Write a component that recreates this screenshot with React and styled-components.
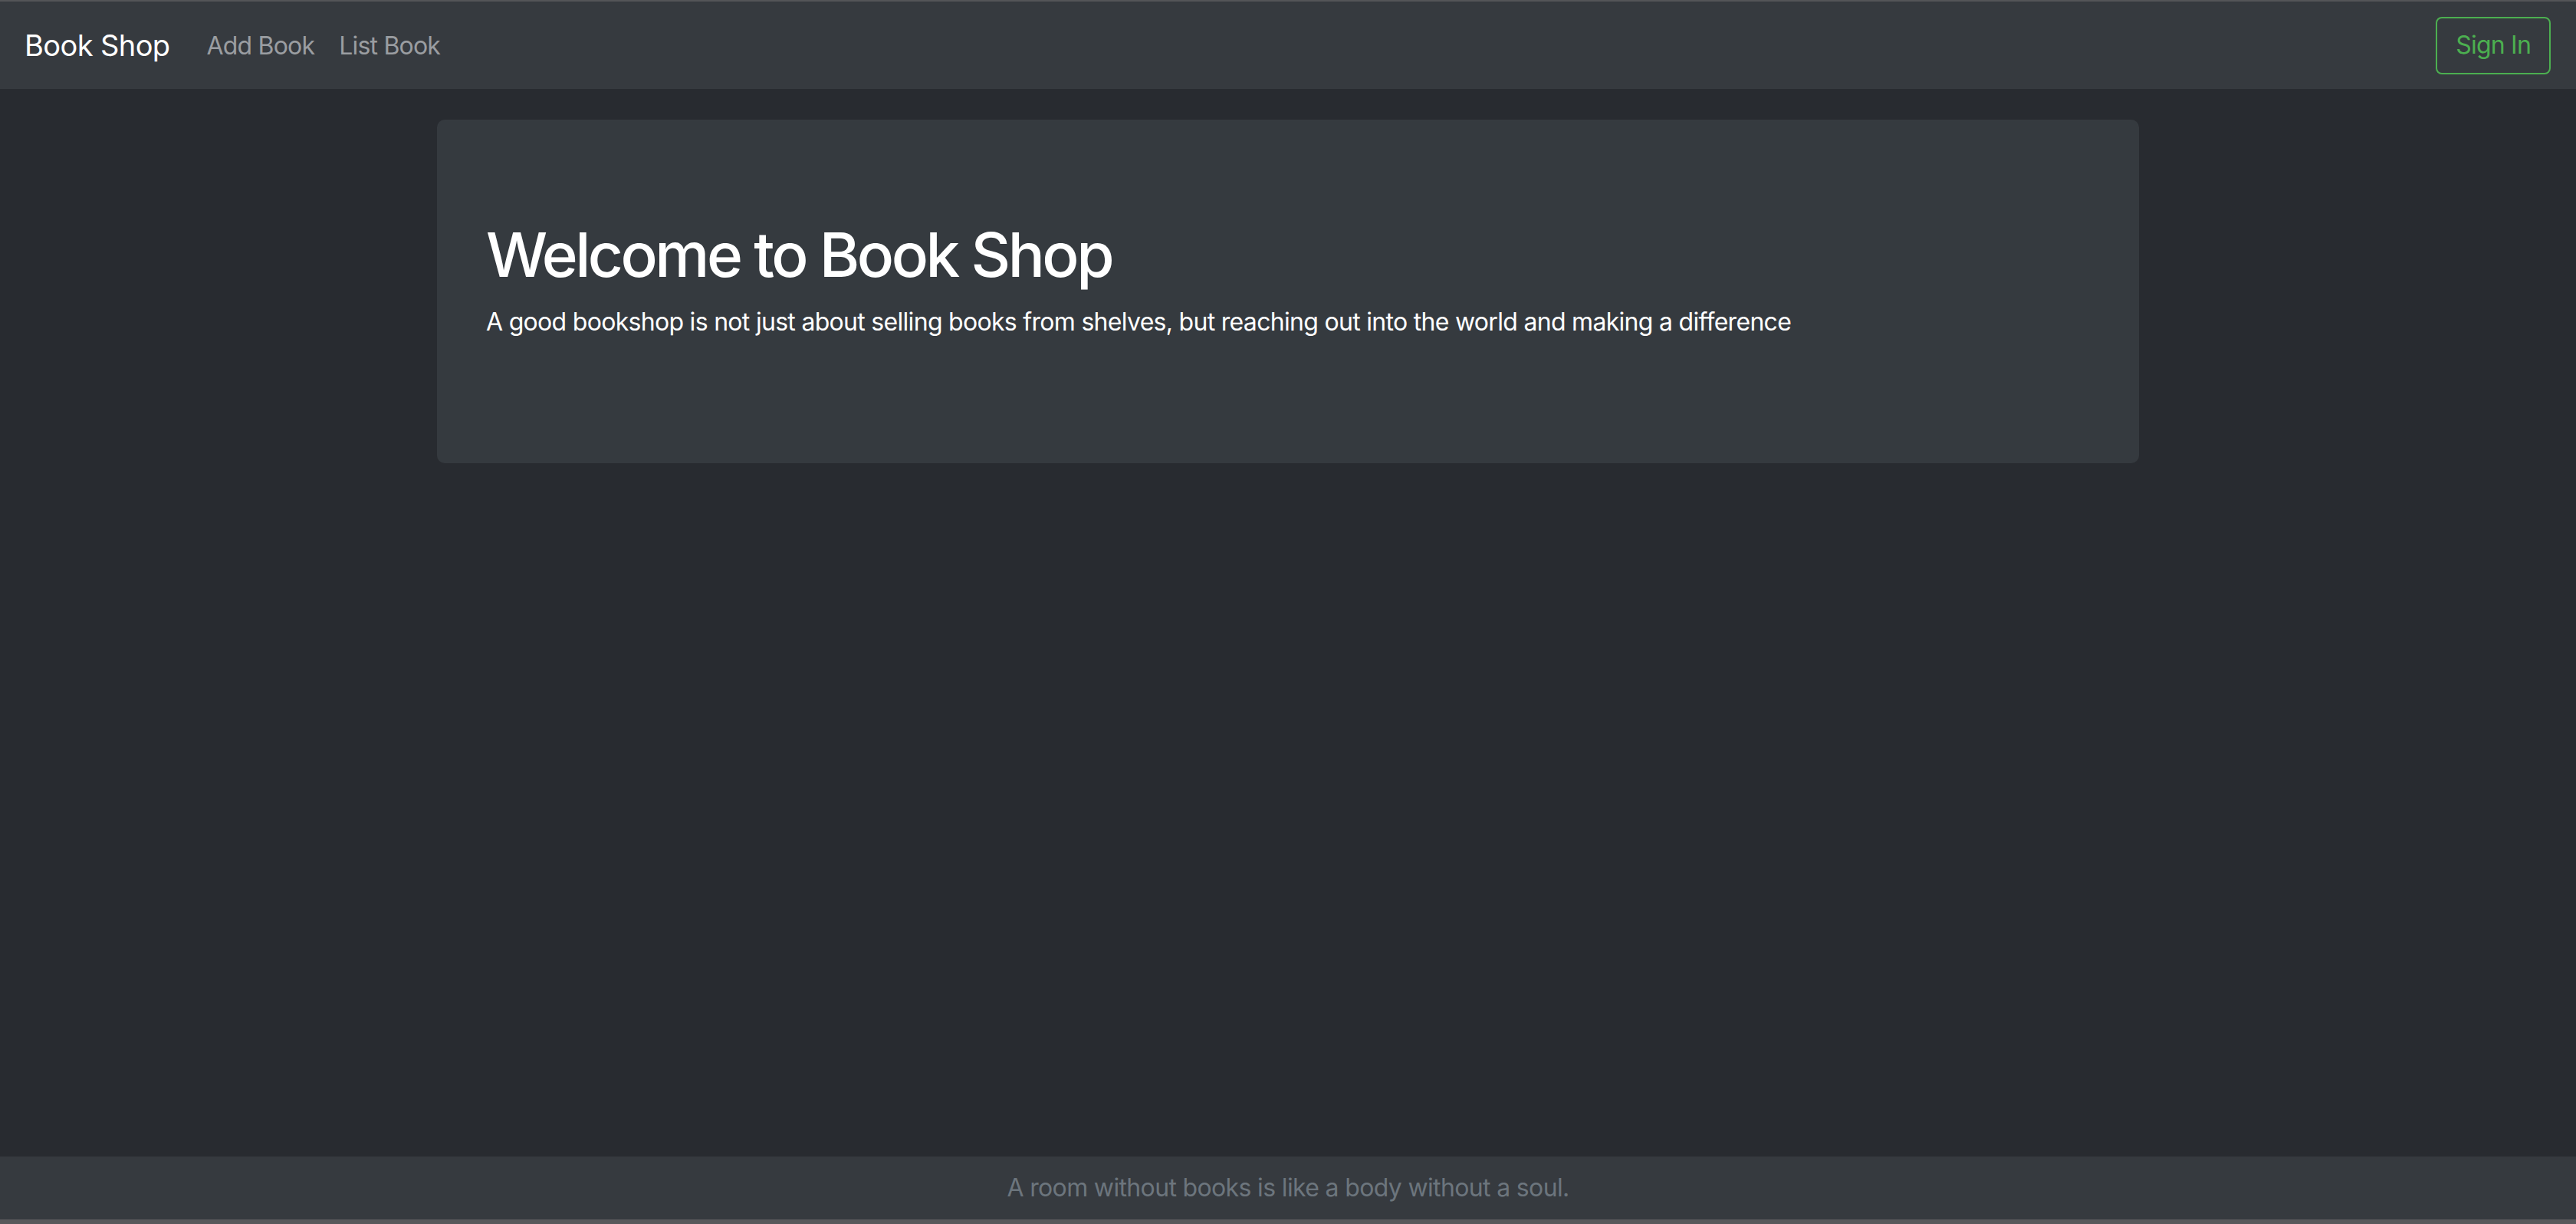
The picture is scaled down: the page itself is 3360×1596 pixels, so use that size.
import styled, { createGlobalStyle } from 'styled-components';

const GlobalStyle = createGlobalStyle`
  * {
    box-sizing: border-box;
  }
  body {
    margin: 0;
    background-color: #282b30;
    font-family: Inter, "Liberation Sans", sans-serif;
  }
`;

function App() {
  return (
    <Page>
      <GlobalStyle />
      <NavBar>
        <NavLeft>
          <Brand href="#">Book Shop</Brand>
          <NavLink href="#">Add Book</NavLink>
          <NavLink href="#">List Book</NavLink>
        </NavLeft>
        <SignInButton>Sign In</SignInButton>
      </NavBar>
      <Main>
        <Hero>
          <Title>Welcome to Book Shop</Title>
          <Lead>
            A good bookshop is not just about selling books from shelves, but reaching out into the world and making a
            difference
          </Lead>
        </Hero>
      </Main>
      <Footer>A room without books is like a body without a soul.</Footer>
    </Page>
  );
}

export default App;

const Page = styled.div`
  min-height: 100vh;
  display: flex;
  flex-direction: column;
  border-top: 2px solid #545558;
  border-bottom: 6px solid #58585b;
`;

const NavBar = styled.nav`
  height: 114px;
  background-color: #363a3f;
  display: flex;
  align-items: center;
  justify-content: space-between;
  padding: 0 33px 0 32px;
`;

const NavLeft = styled.div`
  display: flex;
  align-items: center;
`;

const Brand = styled.a`
  color: #ffffff;
  font-size: 38px;
  text-decoration: none;
  margin-right: 32px;
  letter-spacing: -0.6px;
`;

const NavLink = styled.a`
  color: #9a9da1;
  font-size: 32px;
  text-decoration: none;
  padding: 0 16px;
  letter-spacing: -0.8px;
`;

const SignInButton = styled.button`
  font-family: inherit;
  font-size: 32px;
  line-height: 48px;
  color: #4caf50;
  background: transparent;
  border: 2px solid #4caf50;
  border-radius: 8px;
  padding: 11.5px 24px;
  letter-spacing: -0.8px;
  cursor: pointer;
`;

const Main = styled.main`
  flex: 1;
  padding-top: 40px;
`;

const Hero = styled.section`
  width: 2220px;
  margin: 0 auto;
  background-color: #353a3f;
  border-radius: 10px;
  padding: 128px 64px 130px;
  color: #ffffff;
`;

const Title = styled.h1`
  margin: 0 0 16px;
  font-size: 80px;
  font-weight: 500;
  line-height: 1.2;
  letter-spacing: -3.5px;
`;

const Lead = styled.p`
  margin: 0 0 30px;
  font-size: 32px;
  line-height: 1.5;
  letter-spacing: -0.7px;
`;

const Footer = styled.footer`
  height: 82px;
  background-color: #363a3f;
  color: #6c757d;
  font-size: 32px;
  line-height: 48px;
  display: flex;
  align-items: center;
  justify-content: center;
  letter-spacing: -0.65px;
`;
